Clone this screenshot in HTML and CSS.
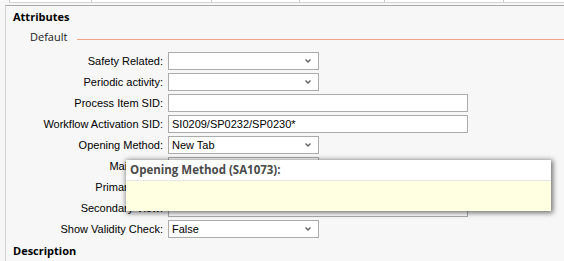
FILE: index.html
```html
<!DOCTYPE html>
<html lang="en">
<head>
  <meta charset="UTF-8">
  <title>Attributes</title>
  <link rel="stylesheet" href="styles.css">
</head>
<body>
  <div class="grid-strip">
    <div class="cell w82"></div>
    <div class="cell w120"></div>
    <div class="cell w88"></div>
    <div class="cell w85"></div>
    <div class="cell w119"></div>
    <div class="cell rest"></div>
  </div>

  <div class="panel">
    <div class="section-title">Attributes</div>

    <div class="group">
      <span class="group-name">Default</span>
      <span class="group-rule"></span>
    </div>

    <div class="form">
      <label>Safety Related:</label>
      <div class="field combo"><span></span><svg class="arrow" width="6" height="4" viewBox="0 0 6 4"><polyline points="0.5,0.5 3,3 5.5,0.5" /></svg></div>

      <label>Periodic activity:</label>
      <div class="field combo"><span></span><svg class="arrow" width="6" height="4" viewBox="0 0 6 4"><polyline points="0.5,0.5 3,3 5.5,0.5" /></svg></div>

      <label>Process Item SID:</label>
      <div class="field wide"><span></span></div>

      <label>Workflow Activation SID:</label>
      <div class="field wide"><span>SI0209/SP0232/SP0230*</span></div>

      <label>Opening Method:</label>
      <div class="field combo"><span>New Tab</span><svg class="arrow" width="6" height="4" viewBox="0 0 6 4"><polyline points="0.5,0.5 3,3 5.5,0.5" /></svg></div>

      <label>Main View:</label>
      <div class="field combo"><span></span><svg class="arrow" width="6" height="4" viewBox="0 0 6 4"><polyline points="0.5,0.5 3,3 5.5,0.5" /></svg></div>

      <label>Primary View:</label>
      <div class="field wide"><span></span></div>

      <label>Secondary View:</label>
      <div class="field wide"><span></span></div>

      <label>Show Validity Check:</label>
      <div class="field combo"><span>False</span><svg class="arrow" width="6" height="4" viewBox="0 0 6 4"><polyline points="0.5,0.5 3,3 5.5,0.5" /></svg></div>
    </div>

    <div class="section-title lower">Description</div>
  </div>

  <div class="tooltip">
    <div class="tooltip-head">Opening Method (SA1073):</div>
    <div class="tooltip-body"></div>
  </div>
</body>
</html>
```

FILE: styles.css
```css
body {
  margin: 0;
  background-color: #f7f7f7;
  font-family: "Liberation Sans", Arial, sans-serif;
  font-size: 11px;
  color: #000;
  overflow: hidden;
}
.grid-strip {
  display: flex;
  height: 2px;
  margin-left: 9px;
  background: #ffffff;
  border-bottom: 1px solid #d4d4d4;
}
.cell {
  border-left: 1px solid #c8c8c8;
  box-sizing: border-box;
}
.w82 { width: 82px; }
.w120 { width: 120px; }
.w88 { width: 88px; }
.w85 { width: 85px; }
.w119 { width: 119px; }
.rest { flex: 1; }
.panel {
  margin-top: 2px;
  margin-left: 5px;
  border-left: 1px solid #d2d2d2;
  border-top: 1px solid #a8a8a8;
  height: 260px;
}
.section-title {
  font-family: "Open Sans", sans-serif;
  font-weight: 700;
  font-size: 11px;
  line-height: 15px;
  padding: 3px 0 0 7px;
  color: #000;
}
.section-title.lower {
  padding-top: 5px;
}
.group {
  display: flex;
  margin-top: 5px;
  padding-left: 24px;
  height: 15px;
}
.group-name {
  font-family: "Open Sans", sans-serif;
  font-size: 11px;
  line-height: 15px;
  color: #1a1a1a;
}
.group-rule {
  flex: 1;
  height: 1px;
  margin: 10px 0 0 10px;
  background: #f0a387;
}
.form {
  display: grid;
  grid-template-columns: 157px auto;
  grid-auto-rows: 18px;
  row-gap: 3px;
  column-gap: 5px;
  margin-top: 8px;
  justify-items: start;
}
.form label {
  justify-self: end;
  line-height: 18px;
  white-space: nowrap;
}
.field {
  box-sizing: border-box;
  height: 18px;
  background: #ffffff;
  border: 1px solid #ababab;
  display: flex;
  align-items: center;
  padding: 0 3px;
  line-height: 16px;
}
.field span {
  flex: 1;
}
.combo {
  width: 151px;
}
.wide {
  width: 300px;
}
.arrow {
  margin-right: 4px;
}
.arrow polyline {
  fill: none;
  stroke: #606060;
  stroke-width: 1.4;
}
.tooltip {
  position: absolute;
  left: 126px;
  top: 160px;
  width: 425px;
  height: 51px;
  box-shadow: 1px 1px 5px 1px rgba(0, 0, 0, 0.55);
  display: flex;
  flex-direction: column;
}
.tooltip-head {
  height: 21px;
  background: #ffffff;
  border-bottom: 1px solid #e6e6e6;
  box-sizing: border-box;
  padding-left: 4px;
  font-family: "Open Sans", sans-serif;
  font-weight: 700;
  font-size: 11.5px;
  line-height: 19px;
  color: #4a4a4a;
}
.tooltip-body {
  flex: 1;
  background: #ffffe1;
}
```
